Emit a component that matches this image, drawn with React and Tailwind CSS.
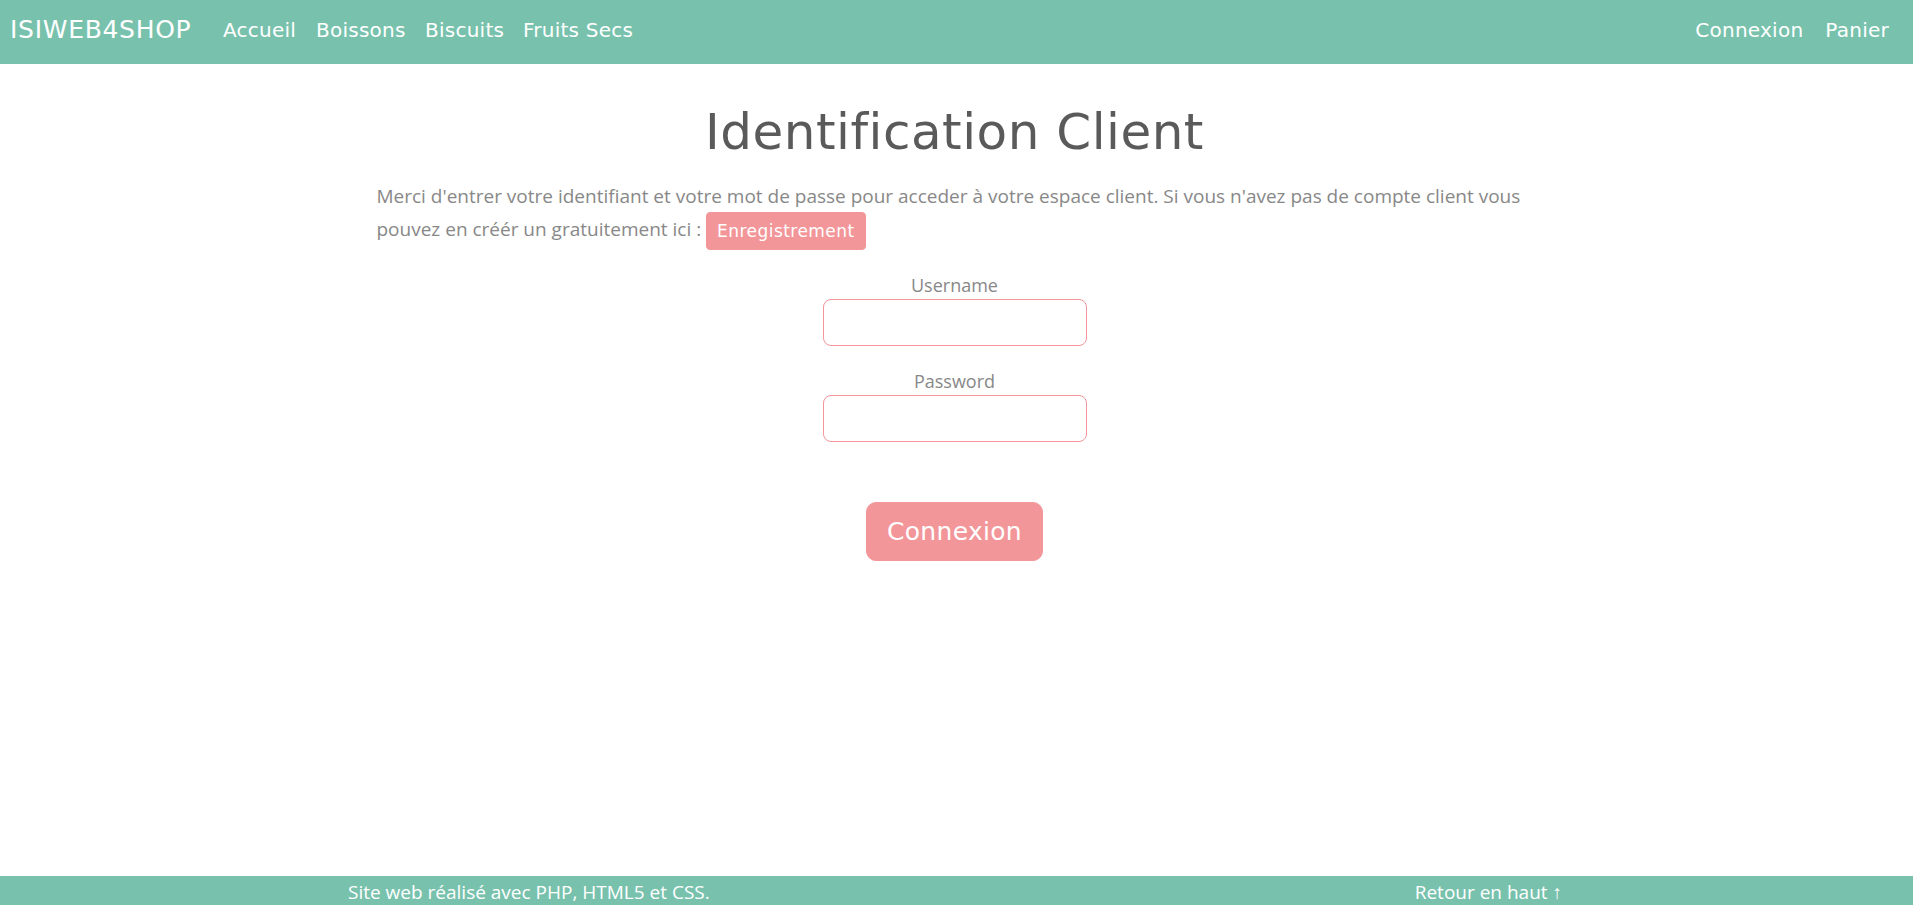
import React from "react";

const mont = { fontFamily: '"DejaVu Sans", "Noto Sans", sans-serif' };

export default function App() {
  return (
    <div className="h-[905px] overflow-hidden flex flex-col bg-white" style={{ fontFamily: '"Open Sans", "Noto Sans", sans-serif' }}>
      <nav className="h-[64px] shrink-0 bg-[#78c2ad] flex items-center justify-between pl-[10px] pr-[24px] pb-[4px] text-white" style={mont}>
        <div className="flex items-center">
          <a className="text-[25px] w-[213px] tracking-[0.7px]">ISIWEB4SHOP</a>
          <a className="text-[20px] w-[93px] tracking-[0.25px]">Accueil</a>
          <a className="text-[20px] w-[109px] tracking-[0.25px]">Boissons</a>
          <a className="text-[20px] w-[98px] tracking-[0.25px]">Biscuits</a>
          <a className="text-[20px] tracking-[0.25px]">Fruits Secs</a>
        </div>
        <div className="flex items-center gap-[22px]">
          <a className="text-[20px] tracking-[0.25px]">Connexion</a>
          <a className="text-[20px] tracking-[0.25px]">Panier</a>
        </div>
      </nav>

      <main className="flex-1 flex justify-center pr-[4px]">
        <div className="w-[1156px]">
          <h1 className="text-center text-[50px] leading-[60px] text-[#5a5a5a] mt-[38px] tracking-[0.5px]" style={mont}>
            Identification Client
          </h1>
          <p className="mt-[19px] text-[19px] leading-[31px] text-[#888]">
            Merci d'entrer votre identifiant et votre mot de passe pour acceder à votre espace client. Si vous n'avez pas de compte client vous
            <br />
            pouvez en créér un gratuitement ici :{" "}
            <button className="inline-block align-middle bg-[#f3969a] text-white text-[17px] leading-[26px] px-[10px] py-[5px] rounded-[4px] border border-[#f3969a] tracking-[0.45px]" style={mont}>
              Enregistrement
            </button>
          </p>
          <form className="flex flex-col items-center mt-[21px]" onSubmit={(e) => e.preventDefault()}>
            <label className="text-[18px] leading-[28px] text-[#888]">Username</label>
            <input className="w-[264px] h-[47px] border border-[#f3969a] rounded-[8px] outline-none" type="text" />
            <label className="text-[18px] leading-[28px] text-[#888] mt-[21px]">Password</label>
            <input className="w-[264px] h-[47px] border border-[#f3969a] rounded-[8px] outline-none" type="password" />
            <button className="mt-[60px] bg-[#f3969a] text-white text-[25px] leading-[37px] px-[20px] py-[10px] rounded-[10px] border border-[#f3969a] tracking-[0.3px]" style={mont}>
              Connexion
            </button>
          </form>
        </div>
      </main>

      <footer className="h-[29px] shrink-0 bg-[#78c2ad] text-white">
        <div className="w-[1217px] mx-auto flex justify-between text-[19px] leading-[24px] pt-[4px]">
          <span>Site web réalisé avec PHP, HTML5 et CSS.</span>
          <span className="mr-[3px]">Retour en haut ↑</span>
        </div>
      </footer>
    </div>
  );
}
